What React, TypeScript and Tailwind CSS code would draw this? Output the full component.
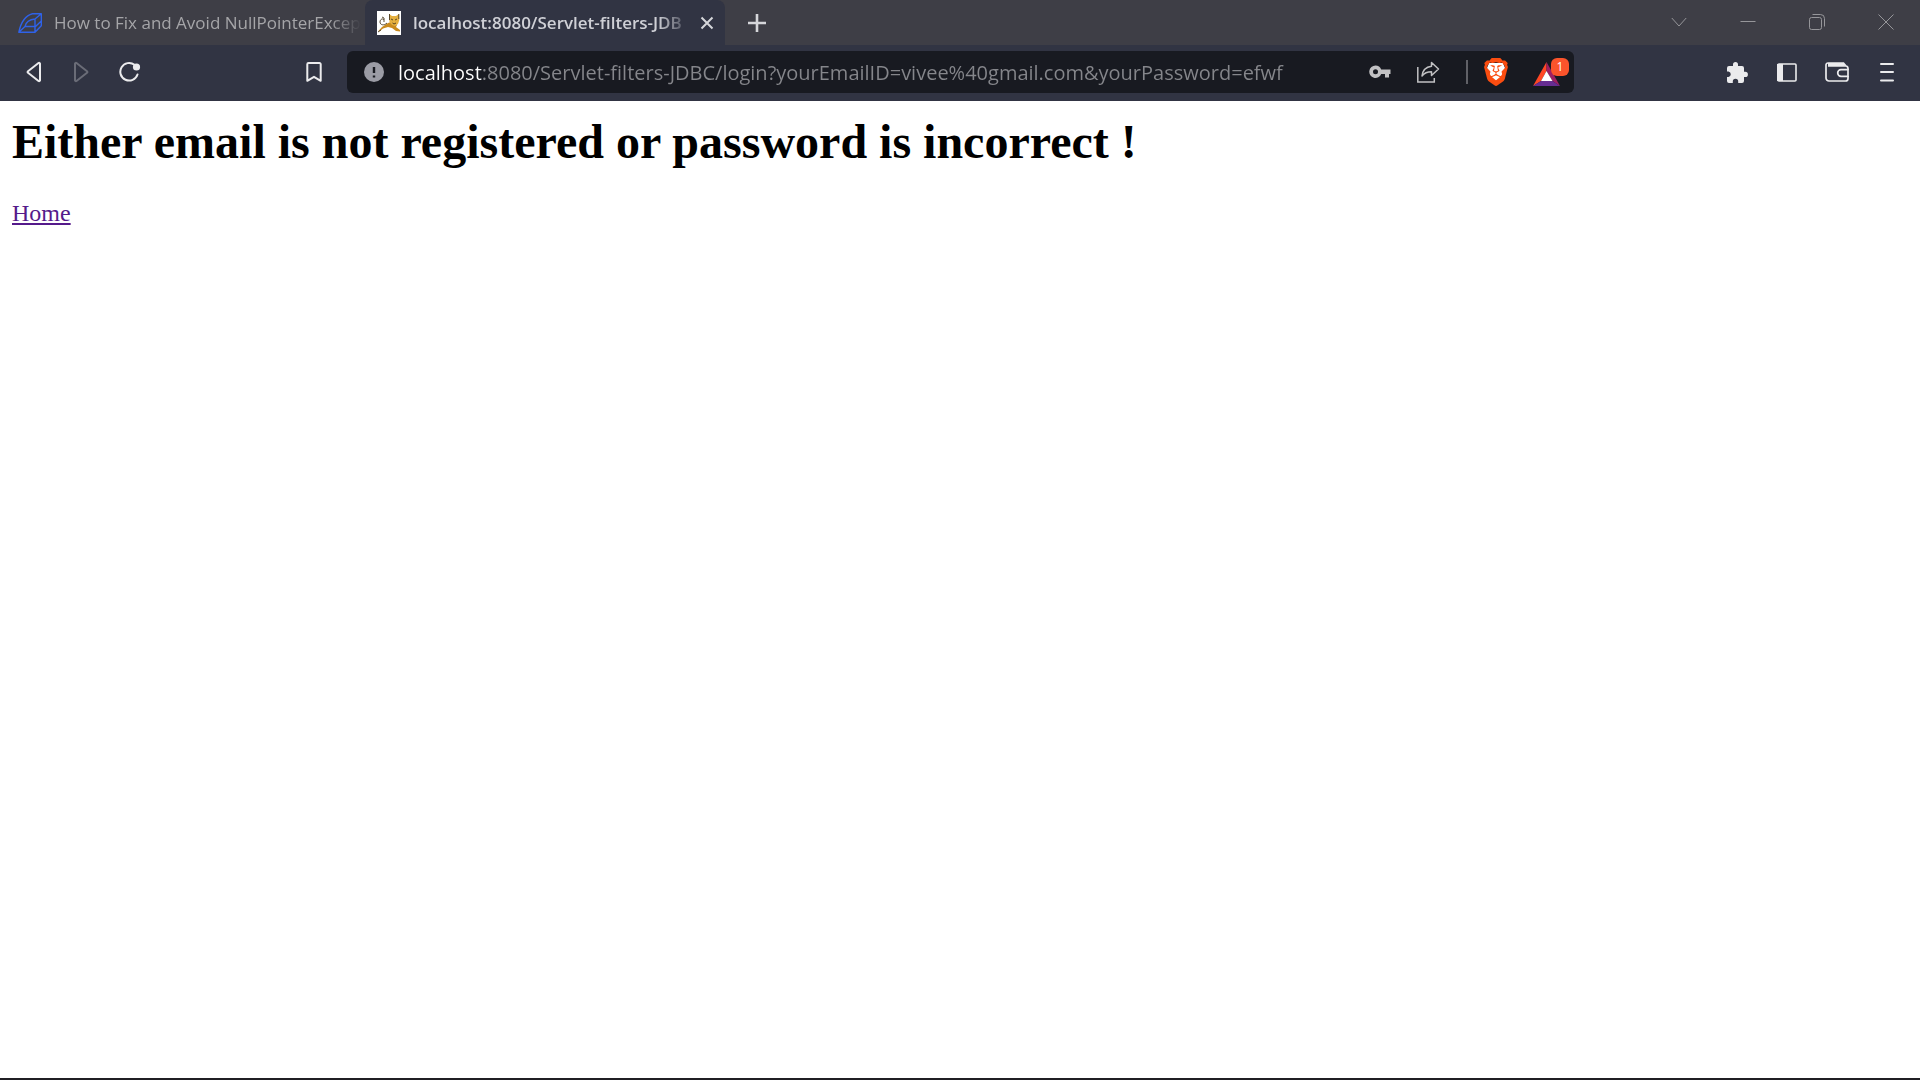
import React from 'react';
import { SiBrave } from 'react-icons/si';

function Caption({ label, children }: { label: string; children: React.ReactNode }) {
  return (
    <button aria-label={label} className="flex h-[43px] w-[69px] items-center justify-center">
      <svg width="16" height="16" viewBox="0 0 16 16" fill="none" stroke="#96969a" strokeWidth="1">{children}</svg>
    </button>
  );
}

function Tool({ label, children }: { label: string; children: React.ReactNode }) {
  return (
    <button aria-label={label} className="flex h-full w-12 items-center justify-center text-[#ebebed]">
      {children}
    </button>
  );
}

function TabStrip() {
  return (
    <div className="flex h-[45px] bg-[#3e3e46]">
      <button className="flex w-[365px] items-center pl-[18px] text-left">
        <svg width="24" height="20" viewBox="0 0 24 20" fill="none" stroke="#2f62e8" strokeWidth="1.4" strokeLinejoin="round" className="shrink-0">
          <path d="M.8 19.300C3 9 8 2.500 14.500 .8H23.300V12.800L17 19.300Z M17 19.300V14L23.300 8 M17 14V6L23.300 .8 M7 13.500H17 M.8 19.300L7 13.500C8 9 11 6.500 17 6" />
        </svg>
        <span className="ml-3 overflow-hidden whitespace-nowrap text-[17px] text-[#a5a5a8] [mask-image:linear-gradient(to_right,#000_90%,transparent)]">How to Fix and Avoid NullPointerExcep</span>
      </button>
      <div className="flex w-[360px] items-center rounded-t-lg bg-[#313443] pl-3">
        <svg width="24" height="24" viewBox="0 0 24 24" className="shrink-0">
          <path fill="#fff" d="M0 0h24v24H0z" />
          <path fill="#c98a1e" d="M1 20.500L5 16l6-4 3-1 6 3-1 2 4 3v1.500l-4-.5-4-3-4-1-5 1.500-3 2.500z" />
          <path fill="#e5b040" d="M12 3l3 2h4l3-2 .3 6-1.300 4-3 2-3-1-2.500-3z" />
          <path fill="none" stroke="#4a3a20" strokeWidth=".9" d="M10 12C7 15 3 14 3 11s3-4 4-2M5 6l2 1v4M12.500 3v6M21.800 3v5M14 8l2 1M20 8l-2 1M15.500 12l1.500 1 2-1M1 21l3-2" />
        </svg>
        <span className="ml-3 w-[278px] shrink-0 overflow-hidden whitespace-nowrap text-[17px] font-semibold text-[#cfd0d6] [mask-image:linear-gradient(to_right,#000_88%,transparent)]">localhost:8080/Servlet-filters-JDB</span>
        <button aria-label="Close tab" className="ml-1 flex h-8 w-6 shrink-0 items-center justify-center">
          <svg width="14" height="14" viewBox="0 0 14 14" stroke="#d5d6da" strokeWidth="2"><path d="M1.500 1.500l11 11M12.500 1.500l-11 11" /></svg>
        </button>
      </div>
      <button aria-label="New tab" className="flex w-16 items-center justify-center">
        <svg width="18" height="18" viewBox="0 0 18 18" stroke="#d5d6da" strokeWidth="2.600"><path d="M9 0v18M0 9h18" /></svg>
      </button>
      <div className="ml-auto flex">
        <Caption label="Search tabs"><path d="M.8 4l7.200 8 7.200-8" /></Caption>
        <Caption label="Minimize"><path d="M.5 7.500h15" /></Caption>
        <Caption label="Restore"><rect x=".5" y="3.500" width="12" height="12" rx="2" /><path d="M3.500.5h8a4 4 0 0 1 4 4v8" /></Caption>
        <Caption label="Close"><path d="M.5.5l15 15M15.500.5l-15 15" /></Caption>
      </div>
    </div>
  );
}

function AddressBar() {
  return (
    <div className="flex h-[42px] min-w-0 flex-1 items-center rounded-md bg-[#181a21] pl-[17px]">
      <button aria-label="View site information" className="shrink-0">
        <svg width="20" height="20" viewBox="0 0 20 20"><circle cx="10" cy="10" r="10" fill="#9b9ca5" /><path d="M10 5v6M10 13.500v2" stroke="#181a21" strokeWidth="2.400" /></svg>
      </button>
      <input
        aria-label="Address"
        defaultValue="localhost:8080/Servlet-filters-JDBC/login?yourEmailID=vivee%40gmail.com&yourPassword=efwf"
        className="ml-[14px] h-full min-w-0 flex-1 bg-[linear-gradient(to_right,#fff_84px,#85868b_84px)] bg-clip-text text-xl text-transparent caret-white outline-none"
      />
      <button aria-label="Saved passwords" className="flex h-full w-12 items-center justify-center">
        <svg width="22" height="14" viewBox="0 0 22 14"><path fill="#c1c1c3" fillRule="evenodd" d="M6.500.5A6.200 6.200 0 1 0 12.200 9H16v3.500h4V9h1.500V4.500h-9.300A6.200 6.200 0 0 0 6.500.5zM6.500 4.300a2.500 2.500 0 1 1 0 5 2.500 2.500 0 0 1 0-5z" /></svg>
      </button>
      <button aria-label="Share this page" className="flex h-full w-12 items-center justify-center">
        <svg width="24" height="22" viewBox="0 0 24 22" fill="none" stroke="#c1c1c3" strokeWidth="1.500"><path d="M1.800 6v15h16.500v-4" /><path d="M15.500 1.500l7 6.500-7 6.500v-3.700c-4 0-7 1-9.500 4.200.5-5 3.500-9 9.500-9.800z" strokeLinejoin="round" /></svg>
      </button>
      <div className="ml-[14px] h-6 w-[2px] bg-[#606167]" />
      <button aria-label="Brave Shields" className="ml-1 flex h-full w-12 items-center justify-center">
        <span className="grid">
          <svg width="28" height="28" viewBox="0 0 28 28" className="col-start-1 row-start-1"><path fill="#fff" d="M7 5h14l2 5-4 11-5 4-5-4L5 10z" /></svg>
          <SiBrave size={28} color="#fb4d10" className="col-start-1 row-start-1" />
        </span>
      </button>
      <button aria-label="Brave Rewards, 1 notification" className="ml-2 flex h-full w-[46px] items-center justify-center">
        <span className="relative flex h-7 w-9 items-end">
          <svg width="27" height="24" viewBox="0 0 27 24">
            <path fill="#ff4724" d="M13.500 0v9L8 19 0 24z" />
            <path fill="#9e1f63" d="M13.500 0L27 24l-7.500-5-6-10z" />
            <path fill="#662d91" d="M0 24l8-5h11.500l7.500 5z" />
            <path fill="#fff" d="M13.500 9l6 10H8z" />
          </svg>
          <span className="absolute right-0 top-0 flex h-[18px] w-[18px] items-center justify-center rounded-md bg-[#fb542b] text-xs text-white">1</span>
        </span>
      </button>
    </div>
  );
}

function Toolbar() {
  return (
    <div className="flex h-14 items-center bg-[#313443] pb-[2px]">
      <div className="flex h-full w-[347px] shrink-0 items-center pl-[10px] pr-[9px]">
        <Tool label="Back"><svg width="18" height="22" viewBox="0 0 18 22" fill="none" stroke="currentColor" strokeWidth="2" strokeLinejoin="round"><path d="M15 2.500v17a1 1 0 0 1-1.500.5L3 11.800a1 1 0 0 1 0-1.600L13.500 2a1 1 0 0 1 1.500.5z" /></svg></Tool>
        <Tool label="Forward"><svg width="18" height="22" viewBox="0 0 18 22" fill="none" stroke="#6a6c77" strokeWidth="2" strokeLinejoin="round"><path d="M2 2.500v17a1 1 0 0 0 1.500.5L14 11.800a1 1 0 0 0 0-1.600L3.500 2a1 1 0 0 0-1.500.5z" /></svg></Tool>
        <Tool label="Reload"><svg width="22" height="22" viewBox="0 0 22 22" fill="none" stroke="currentColor" strokeWidth="2" strokeLinecap="round"><path d="M15.500 3.800A8.800 8.800 0 1 0 18.500 13.500" /><circle cx="17.500" cy="6" r="3.600" fill="currentColor" stroke="none" /></svg></Tool>
        <div className="ml-auto h-full"><Tool label="Bookmark this page"><svg width="16" height="20" viewBox="0 0 16 20" fill="none" stroke="currentColor" strokeWidth="2" strokeLinejoin="round"><path d="M2.500 1h11a1.200 1.200 0 0 1 1.200 1.200V18.800L8 14.800l-6.700 4V2.200A1.200 1.200 0 0 1 2.500 1z" /></svg></Tool></div>
      </div>
      <AddressBar />
      <div className="flex h-full w-[346px] shrink-0 justify-end gap-[2px] pr-[9px]">
        <Tool label="Extensions"><svg width="21" height="21" viewBox="0 0 21 21"><path fill="currentColor" d="M18.300 9.800H17V6a2 2 0 0 0-2-2h-4V2.500a2.500 2.500 0 0 0-5 0V4H2a2 2 0 0 0-2 2v3.500h1.500a2.800 2.800 0 0 1 0 5.500H0v4a2 2 0 0 0 2 2h3.800v-1.500a2.700 2.700 0 0 1 5.400 0V21H15a2 2 0 0 0 2-2v-4h1.300a2.600 2.600 0 0 0 0-5.200z" /></svg></Tool>
        <Tool label="Side panel"><svg width="20" height="19" viewBox="0 0 20 19"><rect x="1" y="1" width="18" height="17" rx="1" fill="none" stroke="currentColor" strokeWidth="1.600" /><path fill="currentColor" d="M0 1h6v17H0z" /></svg></Tool>
        <Tool label="Wallet"><svg width="24" height="20" viewBox="0 0 24 20" fill="none" stroke="currentColor" strokeWidth="1.700"><path d="M23 8V6.500A2.500 2.500 0 0 0 20.500 4H3M23 14v2.500A2.500 2.500 0 0 1 20.500 19H4a3 3 0 0 1-3-3V3a2 2 0 0 1 2-2h15.500L21 4M3 2.500h16" /><path d="M23 7.700h-7a3.300 3.300 0 0 0 0 6.600h7z" /></svg></Tool>
        <Tool label="Menu"><svg width="14" height="20" viewBox="0 0 14 20" stroke="currentColor" strokeWidth="2" strokeLinecap="round"><path d="M1 2h12M1 10h12M1 18.500h12" /></svg></Tool>
      </div>
    </div>
  );
}

export default function App() {
  return (
    <div className="flex min-h-screen flex-col border-b-2 border-[#201f24] bg-white font-['Open_Sans',sans-serif]">
      <header>
        <TabStrip />
        <Toolbar />
      </header>
      <main className="px-3 pt-4 font-['Liberation_Serif',serif] text-black">
        <h1 className="mb-8 text-5xl leading-[50px] font-bold">Either email is not registered or password is incorrect !</h1>
        <a href="#" className="block w-fit text-2xl leading-7 text-[#551a8b] underline decoration-2 underline-offset-2">Home</a>
      </main>
    </div>
  );
}
